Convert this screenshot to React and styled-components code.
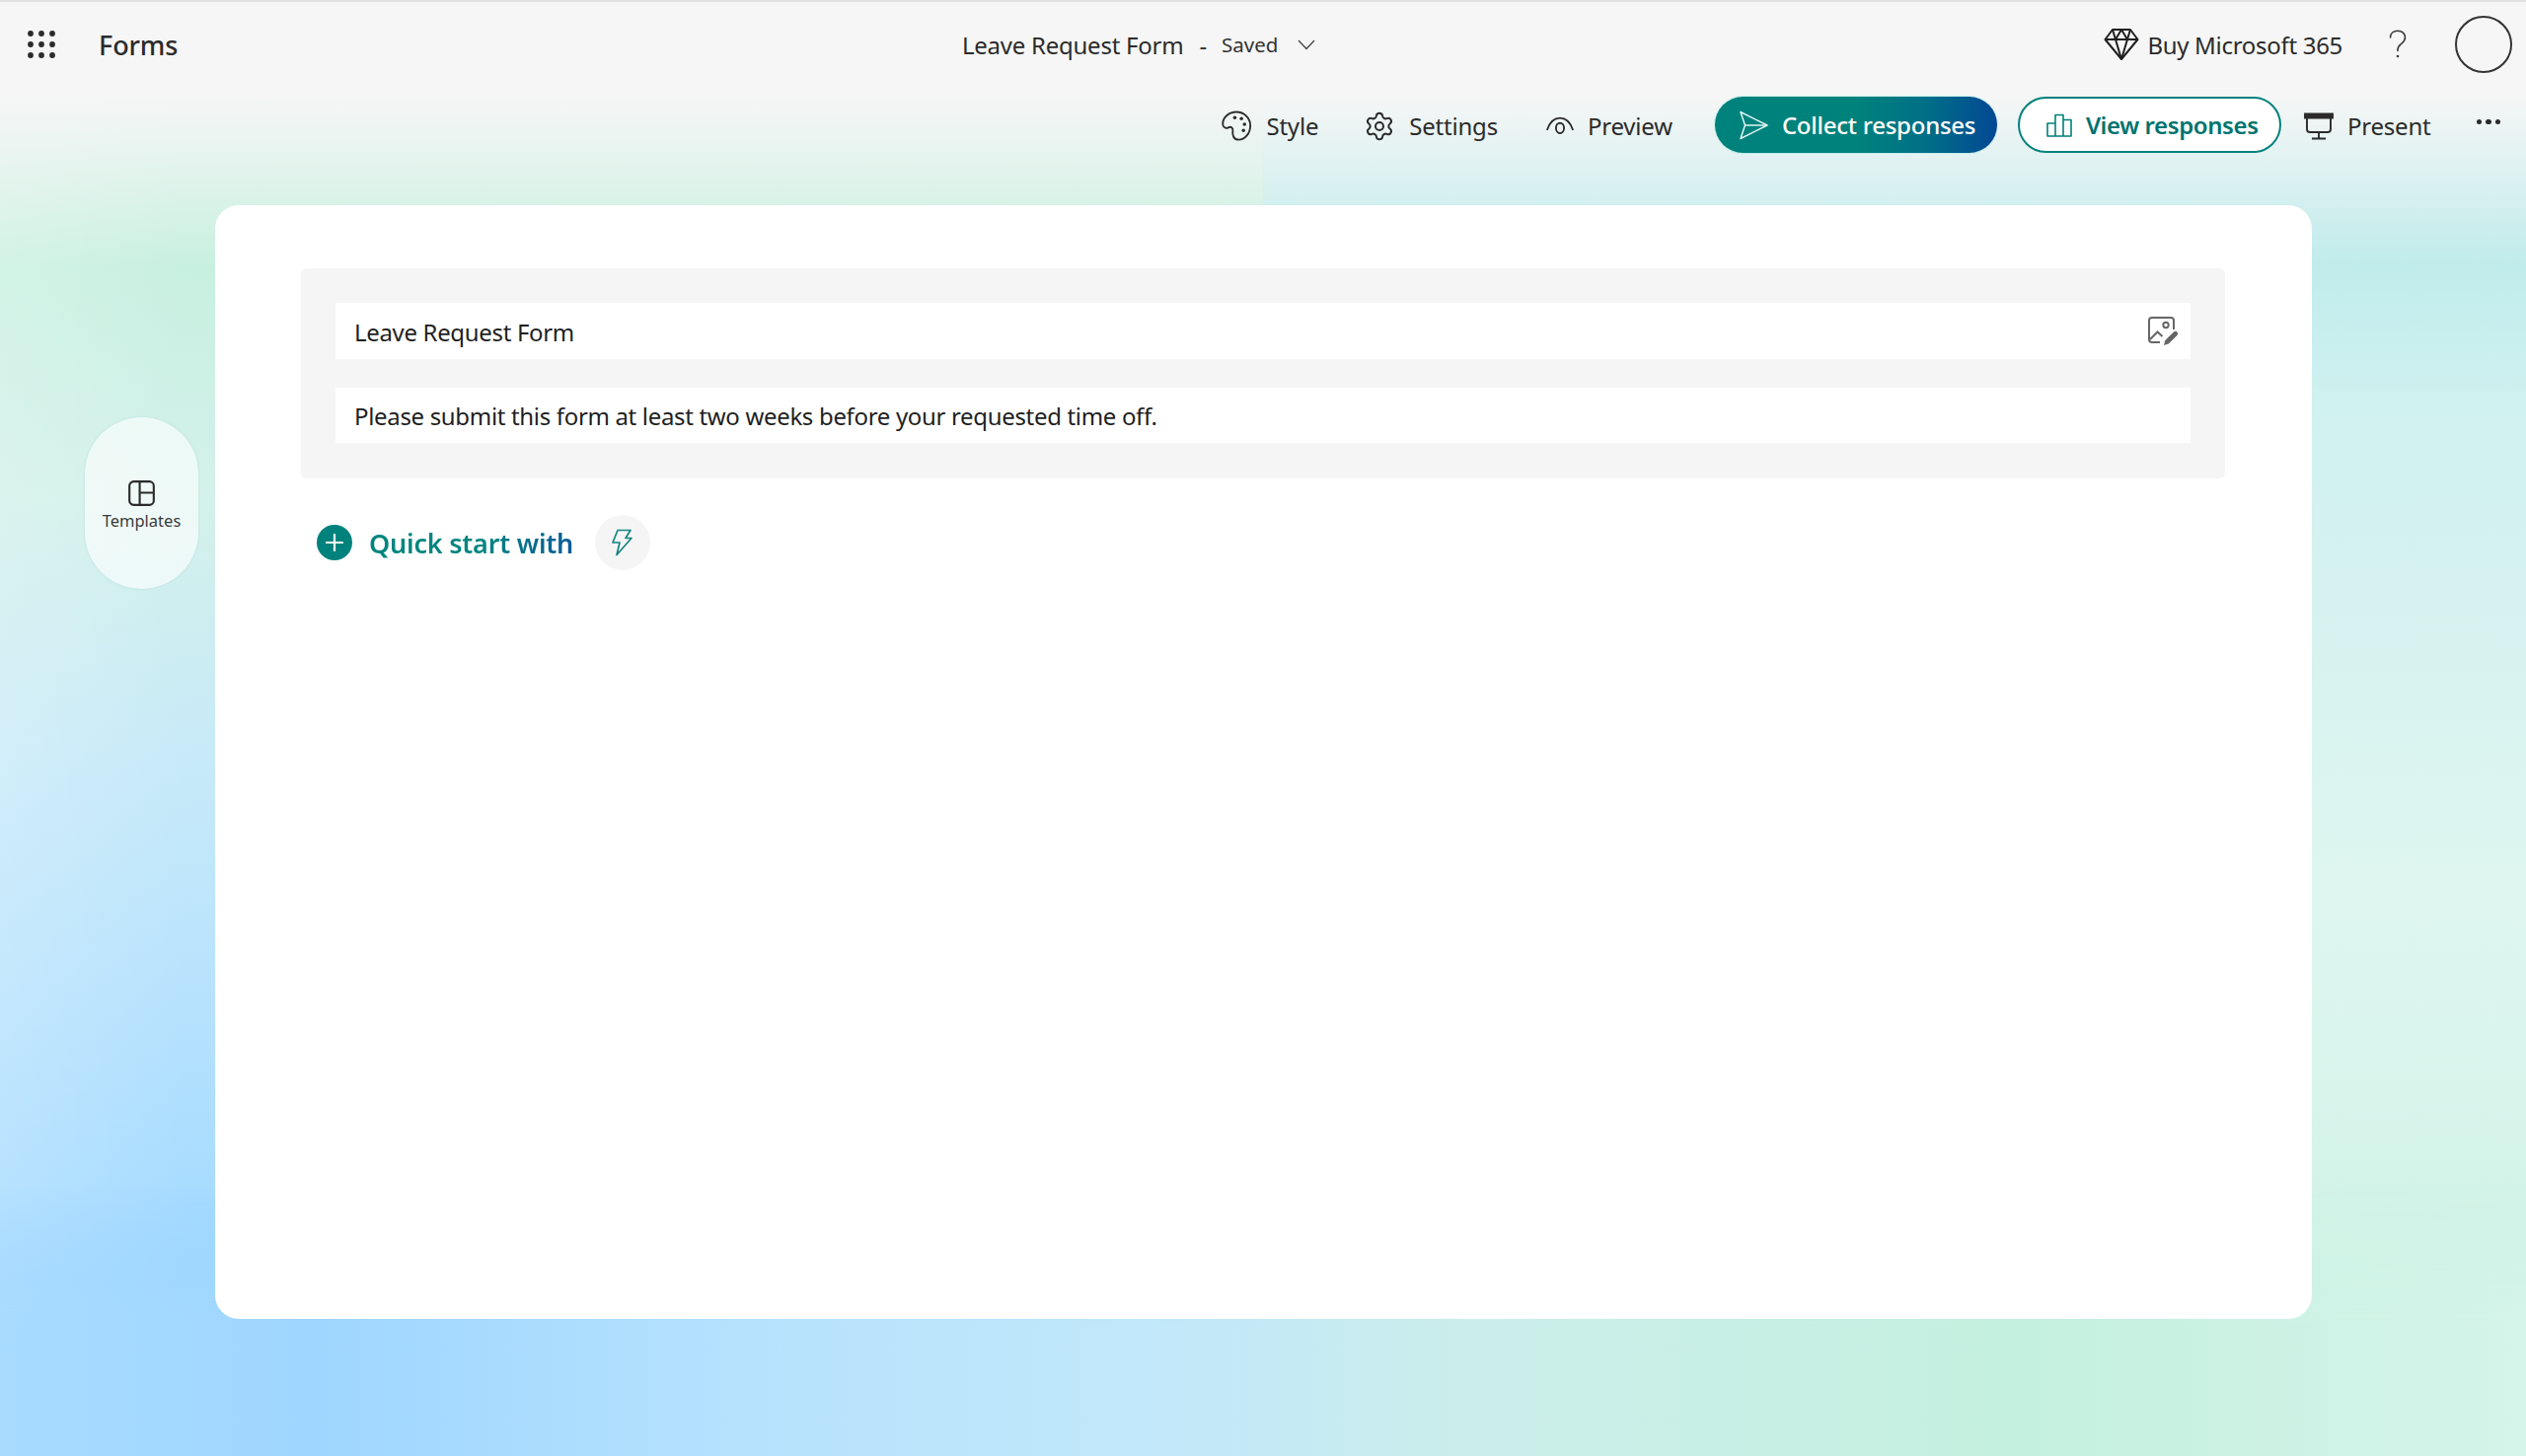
import React from 'react';
import styled, { createGlobalStyle } from 'styled-components';
import { Settings as SettingsIcon } from 'lucide-react';

const GlobalStyle = createGlobalStyle`
  html, body {
    margin: 0;
    padding: 0;
  }
  body {
    font-family: "Noto Sans", "Open Sans", sans-serif;
    color: #242424;
  }
  * {
    box-sizing: border-box;
  }
`;

const App = () => (
  <>
    <GlobalStyle />
    <Page>
      <TopBar>
        <Brand>
          <WaffleIcon />
          <AppName>Forms</AppName>
        </Brand>
        <DocTitle>
          <TitleText>Leave Request Form</TitleText>
          <Dash>-</Dash>
          <SavedText>Saved</SavedText>
          <ChevronIcon />
        </DocTitle>
        <Account>
          <BuyLink>
            <DiamondIcon />
            <span>Buy Microsoft 365</span>
          </BuyLink>
          <HelpIcon />
          <Avatar />
        </Account>
      </TopBar>

      <ToolBar>
        <ToolButton $space={46}>
          <PaletteIcon />
          Style
        </ToolButton>
        <ToolButton $space={49}>
          <SettingsIcon size={32} strokeWidth={1.5} color="#2b2b2b" />
          Settings
        </ToolButton>
        <ToolButton $space={45}>
          <EyeIcon />
          Preview
        </ToolButton>
        <CollectButton>
          <SendIcon />
          Collect responses
        </CollectButton>
        <ViewButton>
          <BarsIcon />
          View responses
        </ViewButton>
        <ToolButton>
          <PresentIcon />
          Present
        </ToolButton>
        <MoreDots>
          <i />
          <i />
          <i />
        </MoreDots>
      </ToolBar>

      <Main>
        <SideRail>
          <TemplatesPill>
            <TemplatesIcon />
            <TemplatesLabel>Templates</TemplatesLabel>
          </TemplatesPill>
        </SideRail>
        <Card>
          <HeaderPanel>
            <Field>
              Leave Request Form
              <ImageEditIcon />
            </Field>
            <Field>Please submit this form at least two weeks before your requested time off.</Field>
          </HeaderPanel>
          <QuickStart>
            <PlusCircle>
              <svg width="20" height="20" viewBox="0 0 20 20">
                <path d="M10 2v16M2 10h16" stroke="#fff" strokeWidth="2.2" strokeLinecap="round" />
              </svg>
            </PlusCircle>
            <QuickText>Quick start with</QuickText>
            <BoltCircle>
              <BoltIcon />
            </BoltCircle>
          </QuickStart>
        </Card>
      </Main>
    </Page>
  </>
);

const WaffleIcon = () => (
  <svg width="28" height="28" viewBox="0 0 28 28" fill="#2b2b2b">
    {[3, 14, 25].map((y) =>
      [3, 14, 25].map((x) => <circle key={`${x}-${y}`} cx={x} cy={y} r="2.9" />)
    )}
  </svg>
);

const ChevronIcon = () => (
  <svg width="20" height="12" viewBox="0 0 20 12" fill="none" stroke="#444" strokeWidth="1.3">
    <path d="M2 2l8 8.5L18 2" />
  </svg>
);

const DiamondIcon = () => (
  <svg width="36" height="34" viewBox="0 0 36 34" fill="none" stroke="#1f1f1f" strokeWidth="2" strokeLinejoin="round">
    <path d="M9 2h18l7.5 10L18 32 1.5 12z" />
    <path d="M1.5 12h33M12 12l6 20 6-20M9 2l3 10 6-10 6 10 3-10" />
  </svg>
);

const HelpIcon = () => (
  <HelpGlyph width="18" height="30" viewBox="0 0 18 30" fill="none" stroke="#3a3a3a" strokeWidth="1.6" strokeLinecap="round">
    <path d="M1.5 8C1.5 4 4.5 1.2 9 1.2S16.5 4 16.5 8c0 3.5-2.2 5-4.2 6.7C10.5 16.2 9 17.5 9 20.5v1" />
    <circle cx="9" cy="27" r="1.3" fill="#3a3a3a" stroke="none" />
  </HelpGlyph>
);

const PaletteIcon = () => (
  <svg width="31" height="31" viewBox="0 0 30 30" fill="none" stroke="#2b2b2b" strokeWidth="1.8">
    <path d="M14.5 1.5C7.5 1.5 1.2 6.5 1.2 13c0 3.6 3 5.2 5.4 3.8 2.6-1.4 4.8.2 4.4 3.2-.5 4 .8 8.7 5.6 8.7 6.4 0 11.6-6.2 11.6-14 0-7.2-5.8-13.2-13.7-13.2z" />
    <circle cx="13" cy="7" r="1.7" fill="#2b2b2b" stroke="none" />
    <circle cx="19.5" cy="8" r="1.7" fill="#2b2b2b" stroke="none" />
    <circle cx="22.5" cy="13.5" r="1.7" fill="#2b2b2b" stroke="none" />
    <circle cx="21.5" cy="19.5" r="1.7" fill="#2b2b2b" stroke="none" />
  </svg>
);

const EyeIcon = () => (
  <svg width="28" height="19" viewBox="0 0 30 20" fill="none" stroke="#2b2b2b" strokeWidth="2">
    <path d="M1.2 14C4 6 9 1.5 15 1.5S26 6 28.8 14" strokeLinecap="round" />
    <ellipse cx="15" cy="12.5" rx="4.4" ry="5.5" />
  </svg>
);

const SendIcon = () => (
  <svg width="30" height="30" viewBox="0 0 30 30" fill="none" stroke="#dff5f2" strokeWidth="1.5" strokeLinejoin="round">
    <path d="M2 1.5L29 15 2 28.5 6.5 15z" />
    <path d="M6.5 15H29" />
  </svg>
);

const BarsIcon = () => (
  <svg width="26" height="24" viewBox="0 0 26 24" fill="none" stroke="#008079" strokeWidth="1.6" strokeLinejoin="round">
    <path d="M1 10h8v13H1zM9 1.5h8V23H9zM17 6.5h8V23h-8z" />
  </svg>
);

const PresentIcon = () => (
  <svg width="30" height="28" viewBox="0 0 30 28" fill="none" stroke="#2b2b2b" strokeWidth="1.9">
    <path d="M1 1.5h28v4H1z" fill="#2b2b2b" />
    <path d="M3 5v12a3 3 0 0 0 3 3h18a3 3 0 0 0 3-3V5M15 20v6.5M8 26.5h14" />
  </svg>
);

const TemplatesIcon = () => (
  <svg width="27" height="26" viewBox="0 0 28 27" fill="none" stroke="#2b2b2b" strokeWidth="2.2">
    <rect x="1.2" y="1.2" width="25.6" height="24.6" rx="4.5" />
    <path d="M12 1.2v24.6M12 13h14.8" />
  </svg>
);

const ImageEditIcon = () => (
  <svg width="30" height="30" viewBox="0 0 30 30" fill="none" stroke="#666" strokeWidth="2">
    <path d="M12 26H4a3 3 0 0 1-3-3V4a3 3 0 0 1 3-3h19a3 3 0 0 1 3 3v9" />
    <circle cx="18" cy="8.5" r="2.7" />
    <path d="M2 23l7.5-7.5 5 4.5" />
    <path d="M16 29l1.3-5L26 15.5a2.4 2.4 0 0 1 3.4 3.4L20.8 27.5z" fill="#666" stroke="none" />
  </svg>
);

const BoltIcon = () => (
  <svg width="22" height="28" viewBox="0 0 22 28" fill="none" stroke="#13857f" strokeWidth="1.7" strokeLinejoin="round">
    <path d="M7 1.5h13l-5 8h6L6 26.5 9 14H2z" />
  </svg>
);

const Page = styled.div`
  position: relative;
  width: 100%;
  height: 100vh;
  overflow: hidden;
  border-top: 2px solid #e2e2e2;
  background:
    linear-gradient(180deg, #f6f6f6 0, #f6f6f6 95px, rgba(246, 246, 246, 0) 270px),
    linear-gradient(90deg, rgba(255, 255, 255, 0.18), rgba(255, 255, 255, 0) 190px),
    linear-gradient(180deg, #c7f0e0 250px, #d3f1ea 500px, #c8eaf8 760px, #b9e3fd 980px, #a8dcff 1200px, #9ad4ff 1300px, #a6daff 1476px) left / 50% 100% no-repeat,
    linear-gradient(180deg, #bfebeb 255px, #cff1f0 400px, #d5f2f0 600px, #dff6f0 900px, #d8f5ec 1100px, #cff2e5 1300px, #d2f2e8 1476px) right / 50% 100% no-repeat;

  &::before {
    content: '';
    position: absolute;
    inset: 0;
    background: linear-gradient(90deg, #a8dbff 0, #9fd6ff 320px, #b8e3fd 800px, #c2e8f9 1200px, #cbeeea 1500px, #c4f0df 2050px, #d5f4ea 2560px);
    mask-image: linear-gradient(180deg, transparent 1200px, #000 1340px);
  }
`;

const TopBar = styled.header`
  position: relative;
  display: grid;
  grid-template-columns: 975px 1fr auto;
  align-items: center;
  height: 86px;
  padding-left: 28px;
  padding-right: 14px;
`;

const Brand = styled.div`
  display: flex;
  align-items: center;
  gap: 44px;
`;

const AppName = styled.div`
  font-size: 27px;
  font-weight: 500;
  letter-spacing: -0.1px;
  color: #2b2b2b;
`;

const DocTitle = styled.div`
  display: flex;
  align-items: center;
  margin-left: -28px;
`;

const TitleText = styled.span`
  font-size: 24px;
  letter-spacing: -0.25px;
  color: #2b2b2b;
`;

const Dash = styled.span`
  font-size: 24px;
  margin-left: 16px;
  color: #333;
`;

const SavedText = styled.span`
  font-size: 20.5px;
  margin-left: 15px;
  margin-right: 19px;
  color: #333;
`;

const Account = styled.div`
  display: flex;
  align-items: center;
`;

const BuyLink = styled.div`
  display: flex;
  align-items: center;
  gap: 8px;
  font-size: 24px;
  letter-spacing: -0.3px;
  color: #2b2b2b;
`;

const HelpGlyph = styled.svg`
  margin-left: 47px;
`;

const Avatar = styled.div`
  width: 58px;
  height: 58px;
  margin-left: 49px;
  border: 2px solid #333;
  border-radius: 50%;
`;

const ToolBar = styled.nav`
  position: relative;
  display: flex;
  align-items: center;
  justify-content: flex-end;
  height: 57px;
  margin-top: 10px;
  padding-right: 26px;
`;

const ToolButton = styled.div`
  display: flex;
  align-items: center;
  gap: 14px;
  margin-right: ${(props) => props.$space || 46}px;
  padding-top: 2px;
  font-size: 24px;
  letter-spacing: -0.2px;
  color: #2b2b2b;
`;

const PillButton = styled.div`
  display: flex;
  align-items: center;
  height: 57px;
  border-radius: 29px;
  font-size: 24px;
  font-weight: 500;
`;

const CollectButton = styled(PillButton)`
  width: 286px;
  gap: 14px;
  padding-left: 24px;
  margin-left: -2px;
  letter-spacing: -0.25px;
  color: #fff;
  background: linear-gradient(90deg, #00827c 0, #00827c 50%, #006f88 75%, #034793 100%);
  box-shadow: 0 0 0 1px rgba(180, 235, 235, 0.7);
`;

const ViewButton = styled(PillButton)`
  width: 267px;
  gap: 14px;
  margin-left: 21px;
  margin-right: 23px;
  padding-left: 27px;
  letter-spacing: -0.4px;
  color: #00736e;
  font-weight: 600;
  background: #fff;
  border: 2px solid #00827c;
`;

const MoreDots = styled.div`
  display: flex;
  gap: 4px;
  margin-bottom: 6px;

  i {
    width: 5.5px;
    height: 5.5px;
    border-radius: 50%;
    background: #2b2b2b;
  }
`;

const Main = styled.main`
  position: relative;
  display: flex;
  gap: 17px;
  margin-top: 53px;
  padding-left: 86px;
`;

const SideRail = styled.aside`
  width: 115px;
  padding-top: 215px;
`;

const TemplatesPill = styled.div`
  display: flex;
  flex-direction: column;
  align-items: center;
  justify-content: center;
  gap: 3px;
  height: 174px;
  padding-top: 5px;
  border-radius: 58px;
  background: rgba(255, 255, 255, 0.62);
  box-shadow: 0 0 3px rgba(120, 160, 160, 0.2);
`;

const TemplatesLabel = styled.span`
  font-size: 16.5px;
  color: #3a3a3a;
`;

const Card = styled.section`
  width: 2125px;
  height: 1129px;
  padding: 64px 88px 0 87px;
  border-radius: 24px;
  background: #fff;
`;

const HeaderPanel = styled.div`
  display: flex;
  flex-direction: column;
  gap: 29px;
  padding: 35px 35px 36px;
  border-radius: 6px;
  background: #f5f5f5;
`;

const Field = styled.div`
  display: flex;
  align-items: center;
  justify-content: space-between;
  height: 56.5px;
  padding: 2px 13px 0 19px;
  background: #fff;
  font-size: 24px;
  letter-spacing: -0.33px;
  color: #1f1f1f;
`;

const QuickStart = styled.div`
  display: flex;
  align-items: center;
  margin-top: 37px;
  margin-left: 16px;
`;

const PlusCircle = styled.div`
  display: flex;
  align-items: center;
  justify-content: center;
  width: 36px;
  height: 36px;
  border-radius: 50%;
  background: #00827c;
`;

const QuickText = styled.span`
  margin-left: 17px;
  font-size: 27px;
  font-weight: 600;
  letter-spacing: -0.22px;
  color: transparent;
  background: linear-gradient(90deg, #00857e 0, #00857e 55%, #0c5a9a 100%);
  background-clip: text;
  -webkit-background-clip: text;
`;

const BoltCircle = styled.div`
  display: flex;
  align-items: center;
  justify-content: center;
  width: 56px;
  height: 56px;
  margin-left: 22px;
  padding-right: 3px;
  border-radius: 50%;
  background: #f5f5f5;
`;

export default App;
